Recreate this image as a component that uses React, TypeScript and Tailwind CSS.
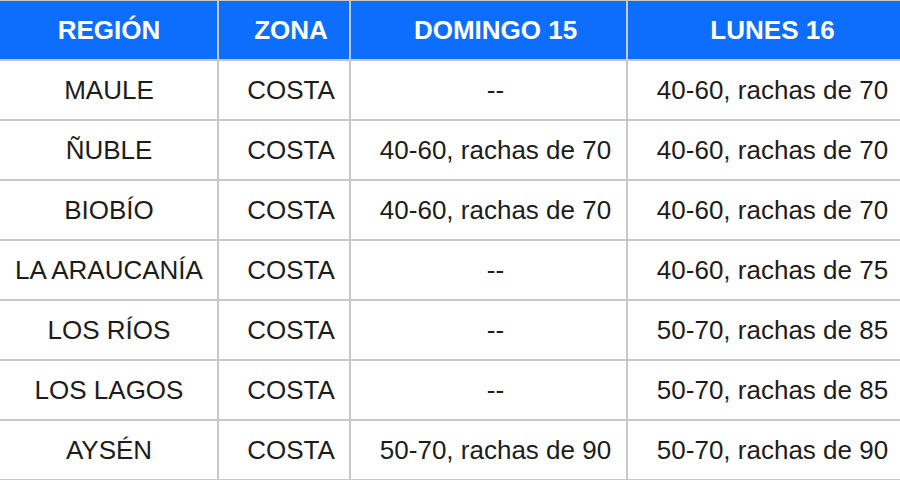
const rows = [
  ["MAULE", "COSTA", "--", "40-60, rachas de 70"],
  ["ÑUBLE", "COSTA", "40-60, rachas de 70", "40-60, rachas de 70"],
  ["BIOBÍO", "COSTA", "40-60, rachas de 70", "40-60, rachas de 70"],
  ["LA ARAUCANÍA", "COSTA", "--", "40-60, rachas de 75"],
  ["LOS RÍOS", "COSTA", "--", "50-70, rachas de 85"],
  ["LOS LAGOS", "COSTA", "--", "50-70, rachas de 85"],
  ["AYSÉN", "COSTA", "50-70, rachas de 90", "50-70, rachas de 90"],
]

const heads = ["REGIÓN", "ZONA", "DOMINGO 15", "LUNES 16"]

function Cell({ text, head }: { text: string; head?: boolean }) {
  return (
    <div
      className={
        head
          ? "flex items-center justify-center pl-[14px] border-r-2 border-b-2 border-t border-[#c8c8c8] bg-[#0d6efd] text-white font-bold h-[61px] whitespace-nowrap"
          : "flex items-center justify-center pl-[14px] border-r-2 border-b-2 border-[#c8c8c8] bg-white text-[#1c1c1c] h-[60px] whitespace-nowrap"
      }
    >
      {text}
    </div>
  )
}

export default function App() {
  return (
    <div className="w-[900px] h-[480px] overflow-hidden bg-white">
      <div className="-ml-[13px] w-[918px] grid grid-cols-[232px_132px_277px_277px] text-[26px] leading-none font-['Liberation_Sans',Arial,sans-serif]">
        {heads.map((h) => (
          <Cell key={h} text={h} head />
        ))}
        {rows.map((r, i) => r.map((c, j) => <Cell key={`${i}-${j}`} text={c} />))}
      </div>
    </div>
  )
}
